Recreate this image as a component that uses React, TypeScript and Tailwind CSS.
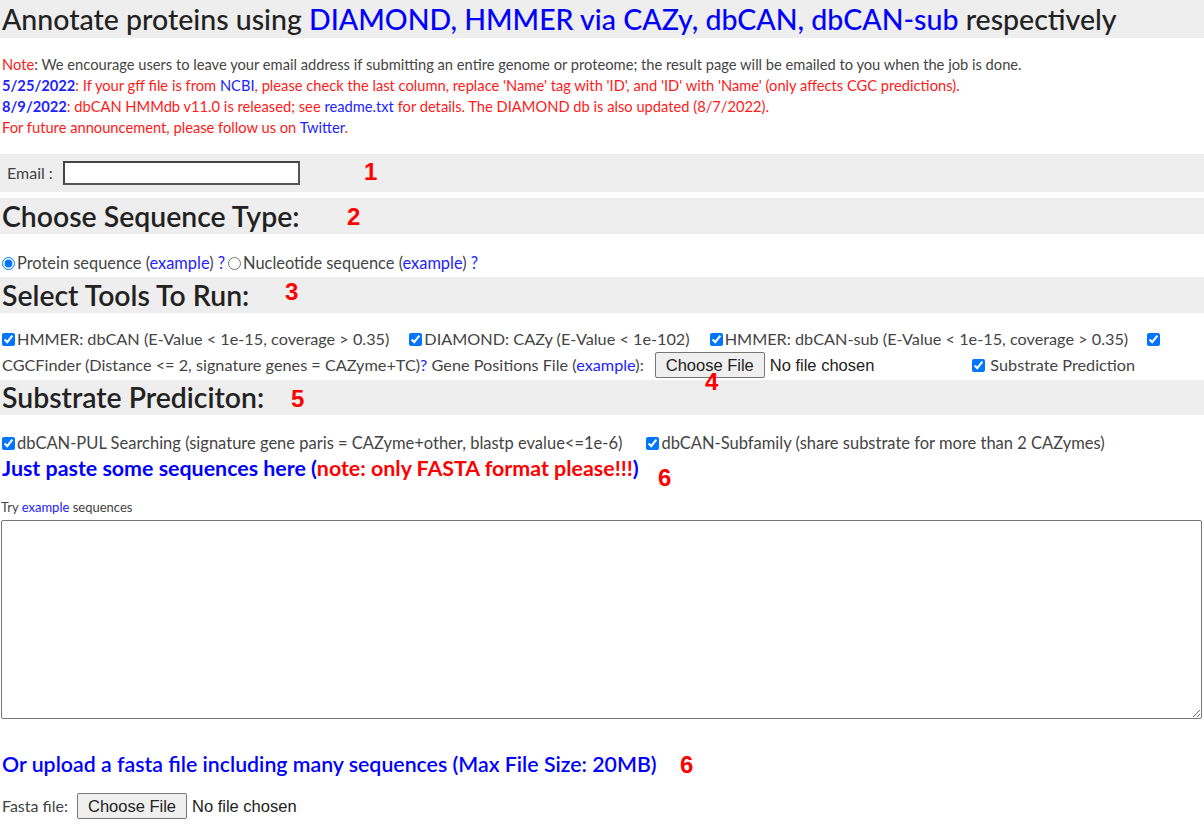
import React from "react"

const blue = "text-[#0000ff]"
const link = "text-[#2222ff]"

function Num({ n, className }: { n: string; className: string }) {
  return (
    <span className={`absolute font-['Liberation_Sans',Arial,sans-serif] font-bold text-[24px] leading-none text-[#ff0000] ${className}`}>
      {n}
    </span>
  )
}

function Check({ className = "" }: { className?: string }) {
  return <input type="checkbox" defaultChecked className={`m-0 w-[13px] h-[13px] accent-[#0075ff] ${className}`} />
}

function FileInput() {
  return (
    <span className="inline-flex items-center font-['Liberation_Sans',Arial,sans-serif] text-[16.5px] text-[#222]">
      <button className="h-[26px] px-[10px] border border-[#767676] rounded-[2px] bg-[#efefef] text-[16.5px] leading-none">
        Choose File
      </button>
      <span className="ml-[5px]">No file chosen</span>
    </span>
  )
}

export default function App() {
  return (
    <div className="w-[1204px] min-h-[824px] bg-white font-['Lato','Noto_Sans',sans-serif] text-[#333]">
      {/* title */}
      <h1 className="bg-[#eeeeee] h-[38px] pl-[2px] text-[28.5px] leading-[38px] font-medium text-[#222] whitespace-nowrap">
        Annotate proteins using <span className={blue}>DIAMOND, HMMER via CAZy, dbCAN, dbCAN-sub</span> respectively
      </h1>

      {/* notes */}
      <div className="mt-[16px] pl-[2px] text-[14.7px] leading-[21px] text-[#ff1a1a] whitespace-nowrap">
        <div>
          Note<span className="text-[#444]">: We encourage users to leave your email address if submitting an entire genome or proteome; the result page will be emailed to you when the job is done.</span>
        </div>
        <div>
          <b className="text-[#2222ff]">5/25/2022</b>: If your gff file is from <span className={link}>NCBI</span>, please check the last column, replace 'Name' tag with 'ID', and 'ID' with 'Name' (only affects CGC predictions).
        </div>
        <div>
          <b className="text-[#2222ff]">8/9/2022</b>: dbCAN HMMdb v11.0 is released; see <span className={link}>readme.txt</span> for details. The DIAMOND db is also updated (8/7/2022).
        </div>
        <div>
          For future announcement, please follow us on <span className={link}>Twitter</span>.
        </div>
      </div>

      {/* email */}
      <div className="relative mt-[16px] bg-[#eeeeee] h-[38px] flex items-center pl-[7px] text-[16px]">
        <span className="text-[#444]">Email :</span>
        <input className="ml-[10px] w-[237px] h-[24px] border-2 border-[#555] bg-white border-t-[#444] border-l-[#444]" />
        <Num n="1" className="left-[364px] top-[6px]" />
      </div>

      {/* sequence type */}
      <div className="relative mt-[6px] bg-[#eeeeee] h-[36px] pl-[2px]">
        <h2 className="text-[28.4px] leading-[36px] font-semibold text-[#222]">Choose Sequence Type:</h2>
        <Num n="2" className="left-[347px] top-[7px]" />
      </div>
      <div className="mt-[19px] flex items-center text-[16.4px] leading-[20px] text-[#444]">
        <input type="radio" name="t" defaultChecked className="m-0 ml-[2px] w-[13px] h-[13px]" />
        <span className="ml-[2px]">
          Protein sequence (<span className={link}>example</span>) <span className={link}>?</span>
        </span>
        <input type="radio" name="t" className="m-0 ml-[3px] w-[13px] h-[13px]" />
        <span className="ml-[2px]">
          Nucleotide sequence (<span className={link}>example</span>) <span className={link}>?</span>
        </span>
      </div>

      {/* tools */}
      <div className="relative mt-[4px] bg-[#eeeeee] h-[36px] pl-[2px]">
        <h2 className="text-[28.4px] leading-[36px] font-semibold text-[#222]">Select Tools To Run:</h2>
        <Num n="3" className="left-[285px] top-[3px]" />
      </div>
      <div className="mt-[13px] pl-[2px] text-[16.25px] text-[#444] whitespace-nowrap">
        <div className="flex items-center h-[26px]">
          <Check />
          <span className="ml-[2px]">HMMER: dbCAN (E-Value &lt; 1e-15, coverage &gt; 0.35)</span>
          <Check className="ml-[20px]" />
          <span className="ml-[2px]">DIAMOND: CAZy (E-Value &lt; 1e-102)</span>
          <Check className="ml-[20px]" />
          <span className="ml-[2px]">HMMER: dbCAN-sub (E-Value &lt; 1e-15, coverage &gt; 0.35)</span>
          <Check className="ml-[19px]" />
        </div>
        <div className="relative flex items-center h-[26px]">
          <span>
            CGCFinder (Distance &lt;= 2, signature genes = CAZyme+TC)<span className={link}>?</span> Gene Positions File (
            <span className={link}>example</span>):
          </span>
          <span className="ml-[11px]">
            <FileInput />
          </span>
          <Check className="ml-[98px]" />
          <span className="ml-[5px]">Substrate Prediction</span>
          <Num n="4" className="left-[703px] top-[18px] z-10" />
        </div>
      </div>

      {/* substrate */}
      <div className="relative mt-[2px] bg-[#eeeeee] h-[35px] pl-[2px]">
        <h2 className="text-[28.4px] leading-[35px] font-semibold text-[#222]">Substrate Prediciton:</h2>
        <Num n="5" className="left-[291px] top-[7px]" />
      </div>
      <div className="mt-[18px] pl-[2px] flex items-center text-[16.5px] leading-[20px] text-[#444] whitespace-nowrap">
        <Check />
        <span className="ml-[2px]">dbCAN-PUL Searching (signature gene paris = CAZyme+other, blastp evalue&lt;=1e-6)</span>
        <Check className="ml-[24px]" />
        <span className="ml-[2px]">dbCAN-Subfamily (share substrate for more than 2 CAZymes)</span>
      </div>

      {/* paste */}
      <div className="relative mt-[2px] pl-[2px]">
        <h3 className={`text-[21.4px] leading-[26px] font-bold ${blue} whitespace-nowrap`}>
          Just paste some sequences here (<span className="text-[#ff0000]">note: only FASTA format please!!!</span>)
        </h3>
        <Num n="6" className="left-[658px] top-[11px]" />
      </div>
      <div className="mt-[19px] pl-[1px] text-[13px] leading-[15px] text-[#444]">
        Try <span className={link}>example</span> sequences
      </div>
      <textarea className="block mt-[5px] ml-[1px] w-[1201px] h-[199px] border border-[#767676] rounded-[2px] bg-white resize" />

      {/* upload */}
      <div className="relative mt-[32px] pl-[2px]">
        <h3 className={`text-[21.3px] leading-[26px] font-semibold ${blue} whitespace-nowrap`}>
          Or upload a fasta file including many sequences (Max File Size: 20MB)
        </h3>
        <Num n="6" className="left-[680px] top-[2px]" />
      </div>
      <div className="mt-[16px] pl-[2px] flex items-center text-[16px] text-[#444]">
        <span>Fasta file:</span>
        <span className="ml-[9px]">
          <FileInput />
        </span>
      </div>
    </div>
  )
}
